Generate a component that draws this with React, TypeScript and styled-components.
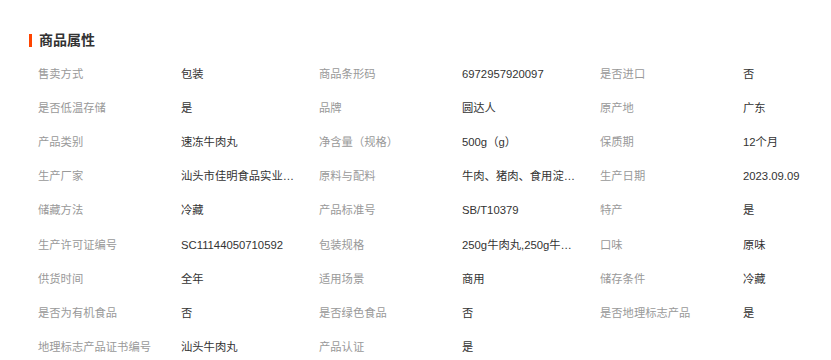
import styled, { createGlobalStyle } from "styled-components";

type Attr = {
  label: string;
  value: string;
};

const attrs: Attr[] = [
  { label: "售卖方式", value: "包装" },
  { label: "商品条形码", value: "6972957920097" },
  { label: "是否进口", value: "否" },
  { label: "是否低温存储", value: "是" },
  { label: "品牌", value: "圆达人" },
  { label: "原产地", value: "广东" },
  { label: "产品类别", value: "速冻牛肉丸" },
  { label: "净含量（规格）", value: "500g（g）" },
  { label: "保质期", value: "12个月" },
  { label: "生产厂家", value: "汕头市佳明食品实业有限公司" },
  { label: "原料与配料", value: "牛肉、猪肉、食用淀粉、食用盐" },
  { label: "生产日期", value: "2023.09.09" },
  { label: "储藏方法", value: "冷藏" },
  { label: "产品标准号", value: "SB/T10379" },
  { label: "特产", value: "是" },
  { label: "生产许可证编号", value: "SC11144050710592" },
  { label: "包装规格", value: "250g牛肉丸,250g牛筋丸" },
  { label: "口味", value: "原味" },
  { label: "供货时间", value: "全年" },
  { label: "适用场景", value: "商用" },
  { label: "储存条件", value: "冷藏" },
  { label: "是否为有机食品", value: "否" },
  { label: "是否绿色食品", value: "否" },
  { label: "是否地理标志产品", value: "是" },
  { label: "地理标志产品证书编号", value: "汕头牛肉丸" },
  { label: "产品认证", value: "是" },
];

const GlobalStyle = createGlobalStyle`
  html, body {
    margin: 0;
    padding: 0;
    background: #fff;
    overflow: hidden;
  }
  body {
    font-family: "Liberation Sans", "Noto Sans CJK SC", sans-serif;
  }
`;

const App = () => {
  return (
    <>
      <GlobalStyle />
      <Section>
        <Header>
          <Marker />
          <Title>商品属性</Title>
        </Header>
        <AttrGrid>
          {attrs.map((attr) => (
            <Cell key={attr.label}>
              <Label>{attr.label}</Label>
              <Value title={attr.value}>{attr.value}</Value>
            </Cell>
          ))}
        </AttrGrid>
      </Section>
    </>
  );
};

const Section = styled.div`
  width: 831px;
  height: 360px;
  box-sizing: border-box;
  padding: 33px 0 0 29px;
  overflow: hidden;
`;

const Header = styled.div`
  display: flex;
  align-items: center;
  gap: 7px;
  height: 14px;
`;

const Marker = styled.span`
  width: 3px;
  height: 13px;
  background-color: #f40;
`;

const Title = styled.h3`
  margin: 0;
  font-size: 14px;
  line-height: 14px;
  font-weight: bold;
  color: #333;
`;

const AttrGrid = styled.div`
  display: grid;
  grid-template-columns: repeat(3, 281px);
  grid-auto-rows: 34.1px;
  margin: 10px 0 0 9px;
  width: 843px;
`;

const Cell = styled.div`
  display: grid;
  grid-template-columns: 143px 138px;
  align-items: center;
  font-size: 11.3px;
  line-height: 16px;
`;

const Label = styled.span`
  color: #999;
  white-space: nowrap;
`;

const Value = styled.span`
  color: #333;
  max-width: 116px;
  white-space: nowrap;
  overflow: hidden;
  text-overflow: ellipsis;
`;

export default App;
